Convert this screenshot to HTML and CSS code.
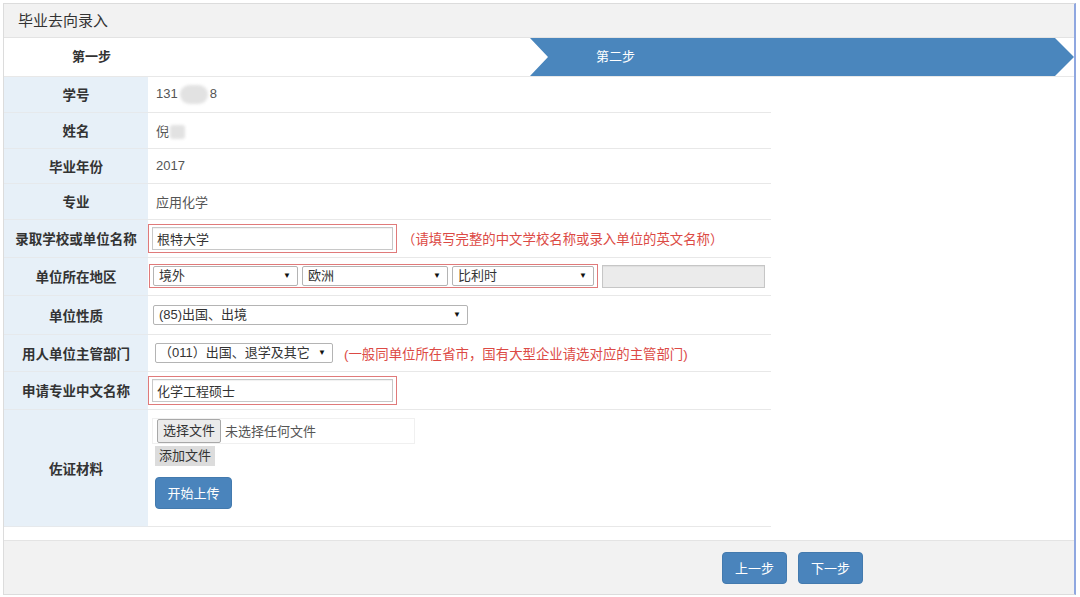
FILE: index.html
```html
<!DOCTYPE html>
<html lang="zh-CN">
<head>
<meta charset="utf-8">
<title>毕业去向录入</title>
<link rel="stylesheet" href="styles.css">
</head>
<body>
<div class="panel">
  <div class="panel-heading">毕业去向录入</div>
  <div class="steps">
    <div class="step step-done">第一步</div>
    <div class="step step-active">第二步</div>
  </div>
  <table class="form">
    <tr class="h35"><th>学号</th><td>131<span class="blur blur-id"></span>8</td></tr>
    <tr class="h36"><th>姓名</th><td>倪<span class="blur blur-name"></span></td></tr>
    <tr class="h35"><th>毕业年份</th><td>2017</td></tr>
    <tr class="h36"><th>专业</th><td>应用化学</td></tr>
    <tr class="h38">
      <th>录取学校或单位名称</th>
      <td><span class="invalid inv-text"><input class="txt" type="text" value="根特大学"></span><span class="hint hint-1">（请填写完整的中文学校名称或录入单位的英文名称）</span></td>
    </tr>
    <tr class="h38">
      <th>单位所在地区</th>
      <td>
        <span class="invalid inv-sel">
          <span class="sel w145"><select><option>境外</option></select></span>
          <span class="sel w146"><select><option>欧洲</option></select></span>
          <span class="sel w142"><select><option>比利时</option></select></span>
        </span><input class="txt disabled" type="text" disabled>
      </td>
    </tr>
    <tr class="h39">
      <th>单位性质</th>
      <td><span class="sel w315 nature"><select><option>(85)出国、出境</option></select></span></td>
    </tr>
    <tr class="h37">
      <th>用人单位主管部门</th>
      <td><span class="sel w178 dept"><select><option>（011）出国、退学及其它</option></select></span><span class="hint hint-2">(一般同单位所在省市，国有大型企业请选对应的主管部门)</span></td>
    </tr>
    <tr class="h38">
      <th>申请专业中文名称</th>
      <td><span class="invalid inv-text"><input class="txt" type="text" value="化学工程硕士"></span></td>
    </tr>
    <tr class="h117">
      <th>佐证材料</th>
      <td class="files">
        <div class="file-box"><span class="file-btn">选择文件</span><span class="file-none">未选择任何文件</span></div>
        <div><span class="add-btn">添加文件</span></div>
        <div><button class="btn upload">开始上传</button></div>
      </td>
    </tr>
  </table>
  <div class="spacer"></div>
  <div class="footer">
    <button class="btn nav">上一步</button>
    <button class="btn nav">下一步</button>
  </div>
</div>
</body>
</html>
```

FILE: styles.css
```css
* { box-sizing: border-box; }
html, body { margin: 0; padding: 0; background: #fff; }
body {
  font-family: "Liberation Sans", "Noto Sans CJK SC", sans-serif;
  font-size: 13px;
  color: #555;
}
.panel {
  margin: 3px 0 0 3px;
  width: 1073px;
  height: 592px;
  border: 1px solid #dcdcdc;
  border-right: 2px solid #8fa7e0;
  display: flex;
  flex-direction: column;
}
.panel-heading {
  height: 34px;
  line-height: 33px;
  background: #f2f2f2;
  border-bottom: 1px solid #e3e3e3;
  padding-left: 14px;
  font-size: 15px;
  color: #333;
}
.steps {
  display: flex;
  height: 39px;
  border-bottom: 1px solid #e8e8e8;
}
.step {
  height: 38px;
  line-height: 38px;
  font-size: 13px;
  padding-left: 68px;
}
.step-done { width: 526px; color: #333; font-weight: bold; }
.step-active {
  flex: 1;
  background: #4a86bd;
  color: #fff;
  padding-left: 66px;
  clip-path: polygon(0 0, calc(100% - 19px) 0, 100% 50%, calc(100% - 19px) 100%, 0 100%, 18px 50%);
}
.form {
  width: 767px;
  border-collapse: collapse;
}
.form th {
  width: 144px;
  background: #e7f0f8;
  color: #333;
  font-weight: bold;
  font-size: 13.5px;
  text-align: center;
  border-bottom: 1px solid #e6e9ec;
  padding: 0;
}
.form td {
  padding: 0 0 0 8px;
  border-bottom: 1px solid #e8e8e8;
  white-space: nowrap;
  vertical-align: middle;
}
.h35 { height: 35px; }
.h36 { height: 36px; }
.h37 { height: 37px; }
.h38 { height: 38px; }
.h39 { height: 39px; }
.h117 { height: 117px; }

.blur {
  display: inline-block;
  vertical-align: middle;
  background: #e2e2e2;
  filter: blur(1.5px);
}
.blur-id { width: 28px; height: 19px; border-radius: 10px; margin: 0 2px 0 2px; }
.blur-name { width: 15px; height: 14px; border-radius: 3px; margin-left: 1px; }

.invalid {
  display: inline-flex;
  align-items: center;
  border: 1px solid #e07a7a;
  vertical-align: middle;
}
.inv-text {
  margin-left: -8px;
  width: 249px;
  height: 29px;
  padding: 2px 3px;
}
.txt {
  font-family: inherit;
  font-size: 13px;
  color: #333;
  border: 1px solid #c8c8c8;
  box-shadow: inset 0 1px 1px rgba(0,0,0,0.06);
  background: #fff;
  height: 23px;
  width: 100%;
  padding: 0 4px;
  margin: 0;
  outline: none;
}
.inv-sel {
  margin-left: -7px;
  height: 24px;
  padding: 0 3px 0 3px;
  gap: 4px;
}
.disabled {
  width: 163px;
  height: 23px;
  margin-left: 4px;
  background: #ebebeb;
  border: 1px solid #c6c6c6;
  vertical-align: middle;
}
.sel {
  position: relative;
  display: inline-block;
  vertical-align: middle;
  height: 20px;
}
.sel select {
  -webkit-appearance: none;
  appearance: none;
  width: 100%;
  height: 20px;
  border: 1px solid #b4b4b4;
  border-radius: 2px;
  background: #fff;
  font-family: inherit;
  font-size: 13px;
  color: #333;
  padding: 0 0 0 5px;
  margin: 0;
  line-height: 18px;
}
.sel::after {
  content: "▼";
  position: absolute;
  right: 7px;
  top: 5px;
  font-size: 8px;
  line-height: 9px;
  color: #111;
  pointer-events: none;
}
.w145 { width: 145px; }
.w146 { width: 146px; }
.w142 { width: 142px; }
.w315 { width: 315px; }
.w178 { width: 178px; }
.nature { margin-left: -3px; }
.dept { margin-left: -1px; }
.dept select { padding-left: 3px; }
.hint {
  color: #dc4a45;
  font-size: 13.4px;
  vertical-align: middle;
}
.hint-1 { margin-left: 5px; }
.hint-2 { margin-left: 11px; }

.files { padding-top: 8px !important; padding-bottom: 17px !important; vertical-align: top !important; }
.file-box {
  display: flex;
  align-items: center;
  width: 263px;
  height: 26px;
  margin-left: -4px;
  padding-left: 4px;
  border: 1px solid #f0f0f0;
  background: #fff;
}
.file-btn {
  display: inline-block;
  height: 24px;
  line-height: 22px;
  padding: 0 5px;
  border: 1px solid #a8a8a8;
  border-radius: 2px;
  background: #ebebeb;
  color: #333;
  font-size: 13px;
}
.file-none { margin-left: 4px; color: #555; }
.add-btn {
  display: inline-block;
  margin-top: 2px;
  margin-left: -1px;
  height: 20px;
  line-height: 20px;
  padding: 0 4px;
  background: #dcdcdc;
  color: #333;
  font-size: 13px;
}
.btn {
  font-family: inherit;
  font-size: 13px;
  color: #fff;
  background: #4a84bc;
  border: 1px solid #437aae;
  border-radius: 4px;
  height: 32px;
  padding: 0;
  cursor: pointer;
}
.upload { width: 77px; margin-top: 11px; margin-left: -1px; }
.spacer { flex: 1; }
.footer {
  height: 54px;
  background: #f2f2f2;
  border-top: 1px solid #e4e4e4;
  display: flex;
  align-items: center;
  justify-content: flex-end;
  gap: 11px;
  padding-right: 211px;
}
.nav { width: 65px; }
```
